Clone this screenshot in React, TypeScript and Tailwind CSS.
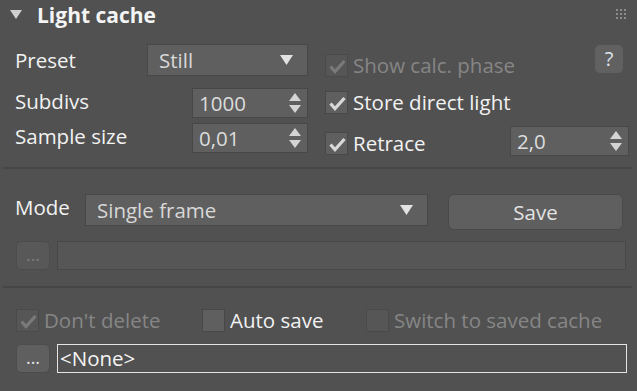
import React from 'react';

const font = "font-['Open_Sans',sans-serif]";

function Check({ disabled }: { disabled?: boolean }) {
  return (
    <svg width="23" height="23" viewBox="0 0 23 23">
      <path
        d="M4.5 11.5 L9 16.5 L18.5 6"
        fill="none"
        stroke={disabled ? '#7a7a7a' : '#d8d8d8'}
        strokeWidth="3.2"
        strokeLinejoin="miter"
      />
    </svg>
  );
}

function Checkbox({
  label,
  checked,
  disabled,
}: {
  label: string;
  checked?: boolean;
  disabled?: boolean;
}) {
  return (
    <div className="flex items-center">
      <div
        className={`w-[23px] h-[23px] border ${
          disabled ? 'bg-[#565656] border-[#4a4a4a]' : 'bg-[#5f5f5f] border-[#484848]'
        }`}
      >
        {checked && <Check disabled={disabled} />}
      </div>
      <span
        className={`ml-[5px] text-[20.5px] leading-none ${
          disabled ? 'text-[#868686]' : 'text-[#f2f2f2]'
        }`}
      >
        {label}
      </span>
    </div>
  );
}

function DownArrow() {
  return (
    <svg width="13" height="10" viewBox="0 0 13 10">
      <polygon points="0,0 13,0 6.5,10" fill="#e2e2e2" />
    </svg>
  );
}

function Spinner({ value, w }: { value: string; w: string }) {
  return (
    <div
      className={`${w} h-[30px] bg-[#5f5f5f] border border-[#474747] flex items-center justify-between pl-[6px] pr-[6px]`}
    >
      <span className="text-[20.5px] leading-none text-[#dcdcdc]">{value}</span>
      <svg width="12" height="20" viewBox="0 0 12 20">
        <polygon points="6,0 12,8 0,8" fill="#d4d4d4" />
        <polygon points="0,12 12,12 6,20" fill="#d4d4d4" />
      </svg>
    </div>
  );
}

function Dropdown({ value, w }: { value: string; w: string }) {
  return (
    <div
      className={`${w} h-[32px] bg-[#5f5f5f] border border-[#474747] flex items-center justify-between pl-[11px] pr-[14px]`}
    >
      <span className="text-[20.5px] leading-none text-[#d8d8d8]">{value}</span>
      <DownArrow />
    </div>
  );
}

function Dots() {
  return (
    <div className="grid grid-cols-3 gap-[2px]">
      {Array.from({ length: 9 }).map((_, i) => (
        <div key={i} className="w-[2px] h-[2px] bg-[#8c8c8c]" />
      ))}
    </div>
  );
}

export default function App() {
  return (
    <div className={`w-[637px] h-[391px] bg-[#515151] overflow-hidden ${font}`}>
      {/* Header */}
      <div className="h-[30px] flex items-center justify-between pl-[10px] pr-[11px]">
        <div className="flex items-center">
          <svg width="12" height="9" viewBox="0 0 12 9" className="mt-[-1px]">
            <polygon points="0,0 12,0 6,9" fill="#d0d0d0" />
          </svg>
          <span className="ml-[15px] text-[21px] font-bold leading-none text-[#f4f4f4]">
            Light cache
          </span>
        </div>
        <div className="mt-[-2px]">
          <Dots />
        </div>
      </div>

      {/* Top section */}
      <div className="flex pl-[15px]">
        <div className="w-[293px] flex flex-col mt-[14px]">
          <div className="h-[32px] flex items-center justify-between">
            <span className="text-[20.5px] leading-none text-[#f2f2f2]">Preset</span>
            <Dropdown value="Still" w="w-[161px]" />
          </div>
          <div className="h-[30px] mt-[12px] flex items-center justify-between">
            <span className="text-[20.5px] leading-none text-[#f2f2f2] mt-[-3px]">Subdivs</span>
            <Spinner value="1000" w="w-[116px]" />
          </div>
          <div className="h-[30px] mt-[5px] flex items-center justify-between">
            <span className="text-[20.5px] leading-none text-[#f2f2f2] mt-[-3px]">Sample size</span>
            <Spinner value="0,01" w="w-[116px]" />
          </div>
        </div>

        <div className="w-[304px] ml-[17px] flex flex-col">
          <div className="flex items-start justify-between pr-[6px] mt-[15px]">
            <div className="mt-[9px]">
              <Checkbox label="Show calc. phase" checked disabled />
            </div>
            <div className="w-[28px] h-[28px] rounded-[5px] bg-[#616161] flex items-center justify-center text-[20px] leading-none text-[#dce4ee]">
              ?
            </div>
          </div>
          <div className="mt-[14px]">
            <Checkbox label="Store direct light" checked />
          </div>
          <div className="mt-[12px] h-[30px] flex items-center justify-between">
            <div className="mt-[4px]">
              <Checkbox label="Retrace" checked />
            </div>
            <Spinner value="2,0" w="w-[119px]" />
          </div>
        </div>
      </div>

      <div className="ml-[3px] w-[629px] h-[2px] bg-[#464646] mt-[11px]" />

      {/* Mode section */}
      <div className="flex items-start pl-[15px] mt-[25px]">
        <div className="w-[70px] h-[32px] flex items-center">
          <span className="text-[20.5px] leading-none text-[#f2f2f2] mt-[-5px]">Mode</span>
        </div>
        <Dropdown value="Single frame" w="w-[343px]" />
        <div className="ml-[20px] w-[175px] h-[36px] rounded-[6px] bg-[#5f5f5f] border border-[#4a4a4a] flex items-center justify-center text-[20.5px] leading-none text-[#e2e2e2]">
          Save
        </div>
      </div>

      <div className="flex pl-[16px] mt-[11px]">
        <div className="w-[34px] h-[29px] rounded-[5px] bg-[#585858] border border-[#4c4c4c] flex items-end justify-center pb-[6px] text-[18px] leading-none text-[#7e7e7e]">
          ...
        </div>
        <div className="ml-[7px] w-[569px] h-[29px] bg-[#565656] border border-[#484848]" />
      </div>

      <div className="ml-[3px] w-[629px] h-[2px] bg-[#464646] mt-[16px]" />

      {/* Bottom section */}
      <div className="flex pl-[16px] mt-[21px]">
        <div className="w-[186px]">
          <Checkbox label="Don't delete" checked disabled />
        </div>
        <div className="w-[164px]">
          <Checkbox label="Auto save" />
        </div>
        <div>
          <Checkbox label="Switch to saved cache" disabled />
        </div>
      </div>

      <div className="flex pl-[16px] mt-[12px]">
        <div className="w-[34px] h-[29px] rounded-[5px] bg-[#5f5f5f] border border-[#4c4c4c] flex items-end justify-center pb-[6px] text-[18px] leading-none text-[#e6e6e6]">
          ...
        </div>
        <div className="ml-[7px] w-[570px] h-[29px] border border-[#e4e4e4] flex items-center pl-[2px]">
          <span className="text-[20.5px] leading-none text-[#f4f4f4]">&lt;None&gt;</span>
        </div>
      </div>
    </div>
  );
}
